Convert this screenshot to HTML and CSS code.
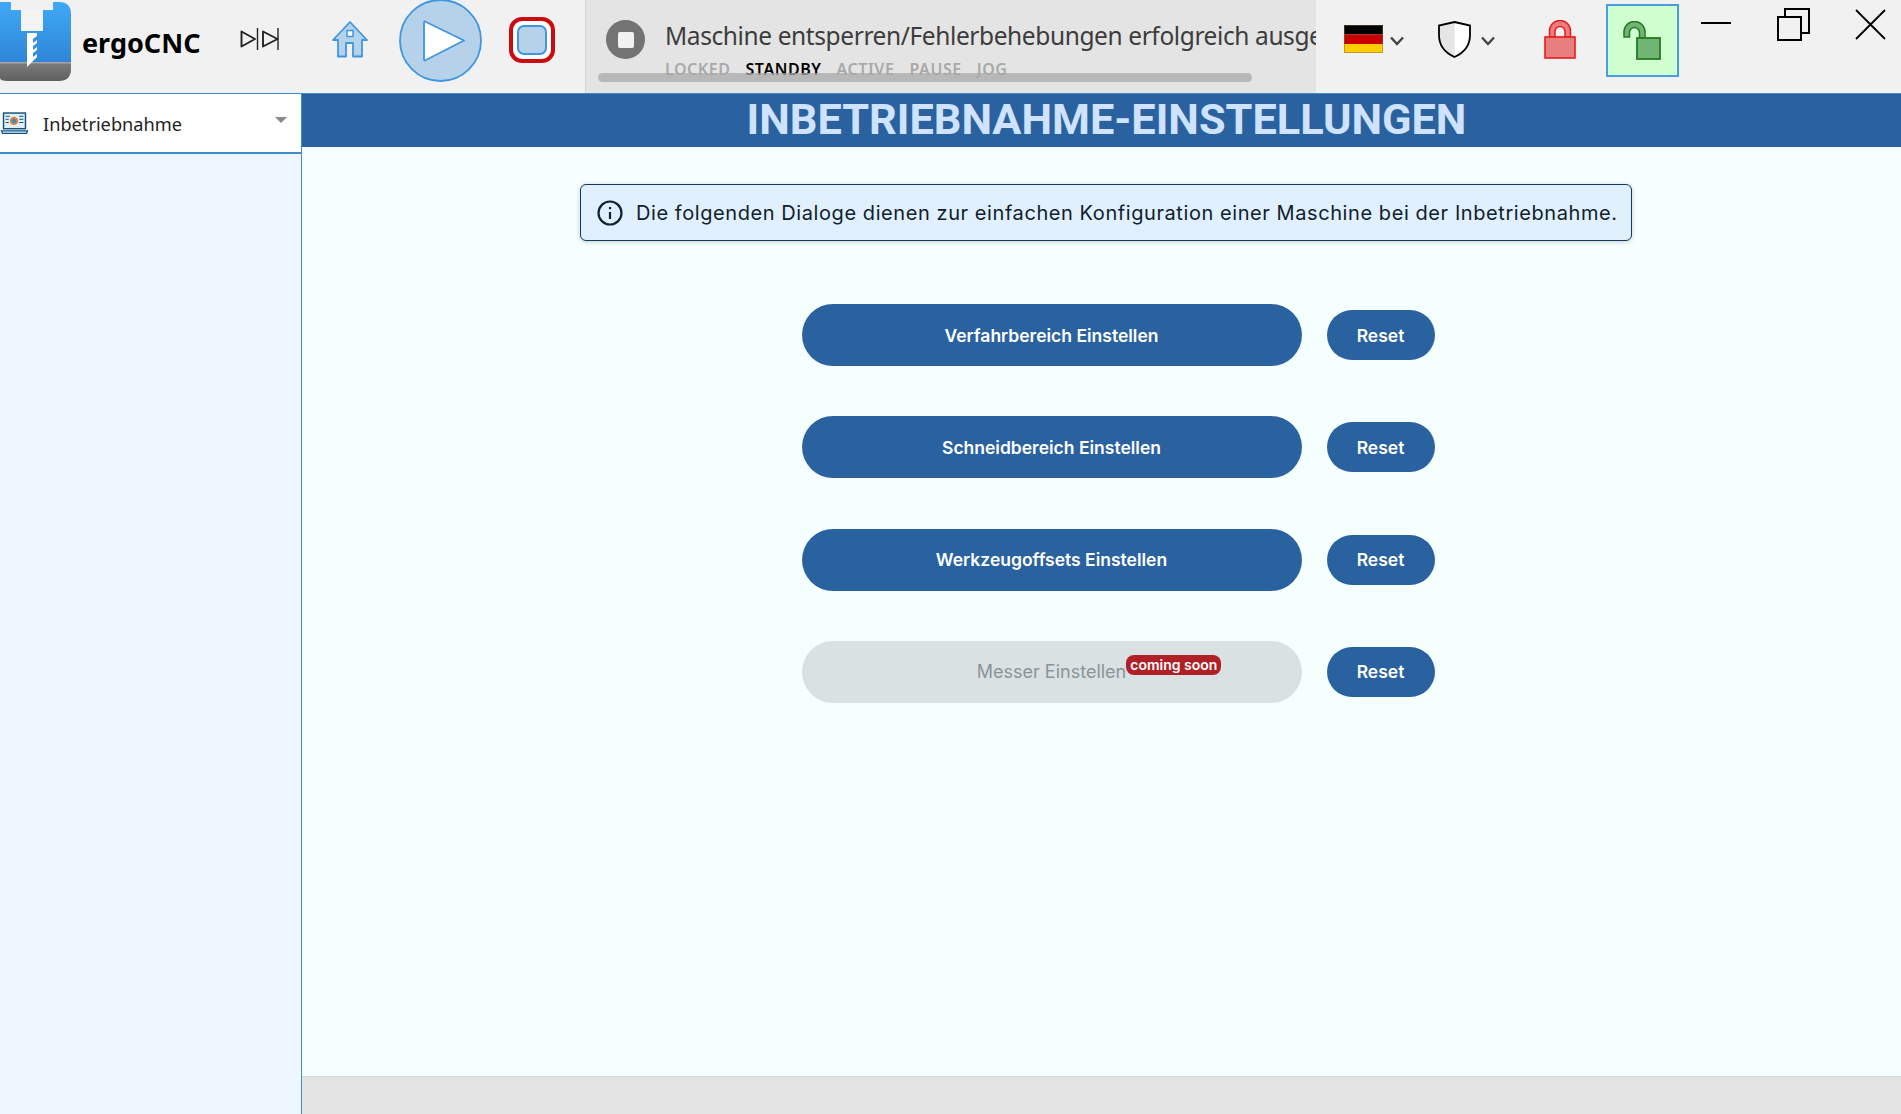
FILE: index.html
```html
<!DOCTYPE html>
<html lang="de">
<head>
<meta charset="utf-8">
<title>ergoCNC</title>
<link rel="stylesheet" href="styles.css">
</head>
<body>
<div class="app">
  <header class="topbar">
    <div class="tools">
      <svg class="logo" width="72" height="80" viewBox="0 0 72 80">
        <defs>
          <linearGradient id="lb" x1="0" y1="0" x2="0" y2="1"><stop offset="0" stop-color="#3fa9f5"/><stop offset="1" stop-color="#2f86d8"/></linearGradient>
          <linearGradient id="lg" x1="0" y1="0" x2="0" y2="1"><stop offset="0" stop-color="#7d7d7d"/><stop offset="1" stop-color="#5f5f5f"/></linearGradient>
        </defs>
        <path d="M0 0H11V8H53V0H59Q71 0 71 12V60H0Z" fill="url(#lb)"/>
        <path d="M0 60H71V67Q71 79 59 79H8Q0 79 0 76Z" fill="url(#lg)"/>
        <rect x="0" y="60" width="71" height="1.5" fill="#a5a5a5"/>
        <path d="M21 8H43V29H21Z" fill="#f4f4f4"/>
        <path d="M27 31H37V55L27 65Z" fill="#fff"/>
        <path d="M33 37L37 34V38L33 41ZM33 44L37 41V45L33 48ZM33 51L37 48V52L33 55Z" fill="#3a8fdc"/>
      </svg>
      <span class="brand">ergoCNC</span>
      <svg class="skip" width="39" height="22" viewBox="0 0 39 22" fill="none" stroke="#222" stroke-width="1.9" stroke-linejoin="round">
        <path d="M1.5 3.5L15 11L1.5 18.5Z"/><path d="M17.5 0V22" stroke-width="1.400"/><path d="M23 3.5L37.5 11L23 18.5Z"/><path d="M38 0V22" stroke-width="1.400"/>
      </svg>
      <svg class="home" width="36" height="37" viewBox="0 0 36 37">
        <path d="M18 1L35 19H30V35.500H21V22H14V35.500H6V19H1Z" fill="#b5d2ea" stroke="#3f97df" stroke-width="1.800" stroke-linejoin="round"/>
        <rect x="15" y="9.500" width="6" height="6" fill="#fff" stroke="#3f97df" stroke-width="1.500"/>
      </svg>
      <svg class="play" width="83" height="83" viewBox="0 0 83 83">
        <circle cx="41.500" cy="41.500" r="40.500" fill="#b5d2ea" stroke="#3f97df" stroke-width="1.800"/>
        <path d="M26 22.500L65 41.500L26 61.500Q25 62 25 60V24Q25 22 26 22.500Z" fill="#fff" stroke="#3f97df" stroke-width="1.800" stroke-linejoin="round"/>
      </svg>
      <div class="stop"><div class="stop-inner"></div></div>
    </div>
    <div class="status">
      <div class="status-main">
        <span class="status-icon"><span class="status-square"></span></span>
        <div class="status-text">
          <div class="message">Maschine entsperren/Fehlerbehebungen erfolgreich ausgeführt</div>
          <div class="states">
            <span>LOCKED</span><span class="state-on">STANDBY</span><span>ACTIVE</span><span>PAUSE</span><span>JOG</span>
          </div>
        </div>
      </div>
      <div class="scrollbar"></div>
    </div>
    <div class="actions">
      <svg class="flag" width="39" height="28" viewBox="0 0 39 28">
        <rect width="39" height="9.500" fill="#000"/><rect y="9.500" width="39" height="9.500" fill="#c80000"/><rect y="19" width="39" height="9" fill="#fc0"/>
        <rect x=".5" y=".5" width="38" height="27" fill="none" stroke="#7a6a3a" stroke-opacity=".5"/>
      </svg>
      <svg class="chev chev-flag" width="14" height="10" viewBox="0 0 14 10" fill="none" stroke="#444" stroke-width="2.400"><path d="M1 1.500L7 8L13 1.500"/></svg>
      <svg class="shield" width="33" height="37" viewBox="0 0 33 37">
        <path d="M16.500 1L32 4.500V14Q32 29 16.500 36Z" fill="#fff"/>
        <path d="M16.500 1L1 4.500V14Q1 29 16.500 36Z" fill="#e6e6e6"/>
        <path d="M16.500 1L32 4.500V14Q32 29 16.500 36Q1 29 1 14V4.500Z" fill="none" stroke="#000" stroke-width="1.800"/>
      </svg>
      <svg class="chev chev-shield" width="14" height="10" viewBox="0 0 14 10" fill="none" stroke="#444" stroke-width="2.400"><path d="M1 1.500L7 8L13 1.500"/></svg>
      <svg class="lock" width="32" height="39" viewBox="0 0 32 39">
        <path d="M5.500 17V11A10.500 10.500 0 0 1 26.500 11V17H21V11.500A5 5 0 0 0 11 11.500V17Z" fill="#e77f7f" stroke="#e81c1c" stroke-width="1.500"/>
        <rect x="1" y="17" width="30" height="21" fill="#e77f7f" stroke="#e81c1c" stroke-width="1.600"/>
      </svg>
      <div class="unlock-box">
        <svg width="39" height="39" viewBox="0 0 39 39">
          <path d="M1 16V11A10.500 10.500 0 0 1 22 11V17H16.500V11.500A5 5 0 0 0 6.500 11.500V16Z" fill="#72b572" stroke="#227a22" stroke-width="1.500"/>
          <rect x="14" y="17" width="23" height="21" fill="#72b572" stroke="#227a22" stroke-width="1.800"/>
        </svg>
      </div>
      <span class="win-min"></span>
      <svg class="win-restore" width="33" height="33" viewBox="0 0 33 33" fill="none" stroke="#000" stroke-width="2"><rect x="1" y="9" width="23" height="23"/><path d="M8 9V1H32V25H24"/></svg>
      <svg class="win-close" width="31" height="31" viewBox="0 0 31 31" fill="none" stroke="#000" stroke-width="1.800"><path d="M1 1L30 30M30 1L1 30"/></svg>
    </div>
  </header>
  <div class="body">
    <aside class="sidebar">
      <div class="select">
        <svg class="select-icon" width="29" height="23" viewBox="0 0 27 22">
          <rect x="3" y="1" width="21" height="15" fill="#dff0f8" stroke="#17527c" stroke-width="1.400"/>
          <circle cx="13" cy="8.500" r="4" fill="#e2803a"/><circle cx="13" cy="8.500" r="2" fill="#2a8fc0"/>
          <path d="M5 4H9M5 7H8M5 10H8M18 4H22M18 7H22M18 10H22" stroke="#17527c"/>
          <path d="M1 18H26L25 20.500H2Z" fill="#dff0f8" stroke="#17527c" stroke-width="1.200"/>
        </svg>
        <span class="select-label">Inbetriebnahme</span>
        <span class="caret"></span>
      </div>
    </aside>
    <main class="main">
      <h1 class="title"><span class="title-text">INBETRIEBNAHME-EINSTELLUNGEN</span></h1>
      <div class="content">
        <div class="info">
          <svg class="info-icon" width="26" height="26" viewBox="0 0 26 26" fill="none" stroke="#0e2233" stroke-width="2.200">
            <circle cx="13" cy="13" r="11.500"/><path d="M13 12V19"/><path d="M13 7V9.200"/>
          </svg>
          <span>Die folgenden Dialoge dienen zur einfachen Konfiguration einer Maschine bei der Inbetriebnahme.</span>
        </div>
        <div class="rows">
          <div class="row"><button class="pill">Verfahrbereich Einstellen</button><button class="reset">Reset</button></div>
          <div class="row"><button class="pill">Schneidbereich Einstellen</button><button class="reset">Reset</button></div>
          <div class="row"><button class="pill">Werkzeugoffsets Einstellen</button><button class="reset">Reset</button></div>
          <div class="row"><button class="pill pill-off"><span class="pill-label">Messer Einstellen<span class="badge">coming soon</span></span></button><button class="reset">Reset</button></div>
        </div>
      </div>
      <div class="footer"></div>
    </main>
  </div>
</div>
</body>
</html>
```
FILE: styles.css
```css
* { box-sizing: border-box; }
html, body { margin: 0; height: 100%; overflow: hidden; }
body { font-family: Inter, "Liberation Sans", sans-serif; background: #f5ffff; }
svg { display: block; flex: none; }
.app { height: 100vh; display: flex; flex-direction: column; }

.topbar { height: 94px; flex: none; display: flex; background: #f1f1f1; border-bottom: 1px solid #3d8ccb; }
.tools { width: 585px; flex: none; display: flex; align-items: center; padding-bottom: 12px; }
.logo { margin-top: 2px; }
.brand { margin-left: 10px; width: 119px; font: 700 27px "Noto Sans", sans-serif; color: #000; white-space: nowrap; margin-top: 3px; }
.skip { margin-left: 39px; margin-top: -4px; }
.home { margin-left: 53px; margin-top: -2px; }
.play { margin-left: 31px; }
.stop { margin-left: 27px; margin-top: -2px; width: 46px; height: 46px; border: 4px solid #cc0a10; border-radius: 13px; background: #fff; padding: 4px; }
.stop-inner { height: 100%; background: #b5d2ea; border: 2px solid #3f97df; border-radius: 7px; }

.status { width: 731px; flex: none; position: relative; background: #e4e4e4; border-left: 1px solid #d4d4d4; overflow: hidden; }
.status-main { display: flex; padding: 12px 0 0 20px; }
.status-icon { width: 39px; height: 39px; margin-top: 8px; border-radius: 50%; background: #737373; display: flex; align-items: center; justify-content: center; flex: none; }
.status-square { width: 16px; height: 16px; background: #f1f1f1; border-radius: 2px; }
.status-text { margin-left: 20px; min-width: 0; padding-top: 1px; }
.message { font: 400 24.500px/46px "Noto Sans", sans-serif; color: #3c3c3c; white-space: nowrap; letter-spacing: -.4px; }
.states { display: flex; gap: 15px; margin-top: 1px; font: 600 16px/18px "Noto Sans", sans-serif; color: #a9a9a9; letter-spacing: .55px; }
.state-on { color: #000; }
.scrollbar { position: absolute; left: 12px; top: 73px; width: 654px; height: 9px; background: rgba(170,170,170,.75); border-radius: 5px; }

.actions { flex: 1; display: flex; align-items: center; padding-bottom: 15px; }
.flag { margin-left: 28px; }
.chev-flag { margin-left: 7px; margin-top: 3px; }
.shield { margin-left: 34px; }
.chev-shield { margin-left: 10px; margin-top: 3px; }
.lock { margin-left: 49px; margin-top: 1px; }
.unlock-box { margin-left: 30px; width: 73px; height: 73px; margin-top: 2px; background: #d0ffd0; border: 2px solid #4a9ee0; display: flex; align-items: center; justify-content: center; }
.win-min { margin-left: 22px; width: 30px; height: 2px; background: #000; align-self: flex-start; margin-top: 22px; }
.win-restore { margin-left: 46px; align-self: flex-start; margin-top: 8px; }
.win-close { margin-left: 45px; align-self: flex-start; margin-top: 9px; }

.body { flex: 1; display: flex; min-height: 0; }
.sidebar { width: 302px; flex: none; background: #eef6ff; border-right: 1px solid #3d8ccb; }
.select { height: 60px; display: flex; align-items: center; background: #fff; border-bottom: 2px solid #3d8ccb; padding-left: 0; }
.select-label { margin-left: 14px; padding-top: 2px; font: 400 18.200px "Noto Sans", sans-serif; color: #222; }
.caret { margin-left: auto; margin-right: 14px; margin-bottom: 6px; border-left: 6px solid transparent; border-right: 6px solid transparent; border-top: 6px solid #8a8a8a; }

.main { flex: 1; min-width: 0; display: flex; flex-direction: column; }
.title { margin: 0; height: 53px; flex: none; background: #2a62a0; display: flex; justify-content: center; padding-left: 10px; font: 700 43.300px/52px Roboto, "Liberation Sans", sans-serif; color: #cfe2ff; white-space: nowrap; }
.title-text { display: inline-block; }

.content { flex: 1; display: flex; flex-direction: column; align-items: center; padding: 37px 0 0 9px; }
.info { width: 1052px; height: 57px; display: flex; align-items: center; padding-left: 16px; gap: 13px; background: #e0f0ff; border: 1px solid #163a5f; border-radius: 6px; box-shadow: 0 1px 5px rgba(0,0,0,.2); font-size: 20px; letter-spacing: .575px; color: #10202c; white-space: nowrap; }
.rows { display: flex; flex-direction: column; gap: 50.300px; margin-top: 63px; padding-left: 24px; }
.row { display: flex; align-items: center; gap: 25px; }
button { font-family: Inter, sans-serif; border: 0; padding: 0; cursor: pointer; }
.pill { width: 500px; height: 62px; border-radius: 31px; background: #2a62a0; color: #fff; font-size: 17.500px; font-weight: 600; }
.pill-off { background: #dae1e2; color: #8a9499; font-size: 18px; font-weight: 400; }
.pill-label { position: relative; }
.badge { position: absolute; left: 100%; top: -6px; height: 20px; padding: 0 4px; border-radius: 8px; background: #b02026; color: #fff; font-size: 14px; font-weight: 600; line-height: 20px; white-space: nowrap; }
.reset { width: 108px; height: 50px; border-radius: 25px; background: #2a62a0; color: #fff; font-size: 17.500px; font-weight: 600; }
.footer { height: 38px; flex: none; background: #e4e4e4; border-top: 1px solid #d2d2d2; }
```
